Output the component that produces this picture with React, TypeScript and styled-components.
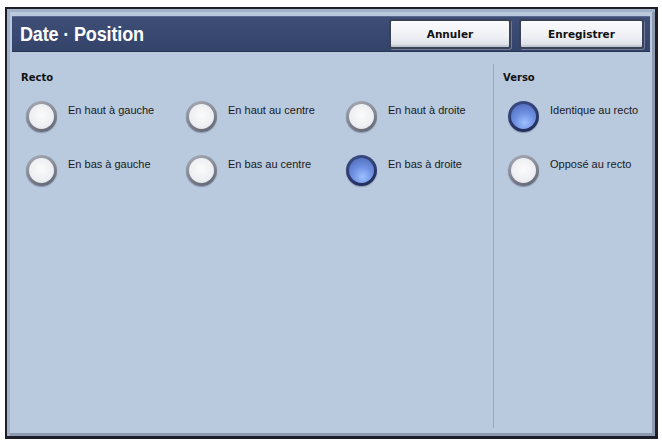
import React from "react";
import styled, { createGlobalStyle } from "styled-components";

const Global = createGlobalStyle`
  html, body { margin: 0; padding: 0; background: #ffffff; }
  body { font-family: "Liberation Sans", Arial, sans-serif; }
`;

const Frame = styled.div`
  box-sizing: border-box;
  margin: 7px 0 0 5px;
  width: 653px;
  height: 432px;
  border: 2px solid #1c1e2a;
  border-right-width: 3px;
  border-bottom-width: 3px;
  background: #b9c9de;
  box-shadow: inset 3px 3px 0 #a4b2c8, inset -3px -3px 0 #8e9ab0;
  display: flex;
  flex-direction: column;
  padding: 7px 5px 5px 5px;
`;

const TitleBar = styled.div`
  height: 36px;
  box-sizing: border-box;
  background: linear-gradient(#3e4e76, #34436a);
  border-top: 1px solid #5a6a90;
  border-bottom: 1px solid #283454;
  display: flex;
  align-items: center;
  justify-content: space-between;
  padding: 0 6px 0 8px;
`;

const Title = styled.h1`
  margin: 0;
  display: inline-block;
  color: #ffffff;
  font-family: "Liberation Sans", Arial, sans-serif;
  font-weight: bold;
  font-size: 21px;
  letter-spacing: -0.2px;
  transform: scaleX(0.86);
  transform-origin: left center;
`;

const Buttons = styled.div`
  display: flex;
  gap: 8px;
`;

const Button = styled.button<{ $w: number }>`
  width: ${(p) => p.$w}px;
  height: 30px;
  box-sizing: border-box;
  border: 2px solid #3a4258;
  border-radius: 3px;
  background: linear-gradient(#fbfbfd 0%, #eef0f4 60%, #d8dce4 100%);
  box-shadow: inset 0 -2px 0 #c2c8d4, 1px 1px 0 #6f7c98;
  font-family: "DejaVu Sans", Verdana, sans-serif;
  font-weight: bold;
  font-size: 10.5px;
  color: #111;
  padding: 0;
`;

const Body = styled.div`
  flex: 1;
  display: flex;
`;

const Section = styled.section<{ $w?: number; $divider?: boolean }>`
  ${(p) => (p.$w ? `width: ${p.$w}px;` : "flex: 1;")}
  box-sizing: border-box;
  padding: ${(p) => (p.$divider ? "8px 0 0 9px" : "20px 0 0 9px")};
  ${(p) => (p.$divider ? "border-left: 1px solid #97a7c0; margin: 12px 0 3px 0;" : "")}
`;

const Label = styled.div`
  font-family: "DejaVu Sans", Verdana, sans-serif;
  font-weight: bold;
  font-size: 10px;
  color: #111;
  height: 14px;
`;

const Grid = styled.div<{ $cols: number }>`
  display: grid;
  grid-template-columns: repeat(${(p) => p.$cols}, 160px);
  row-gap: 23px;
  margin-top: 15px;
  padding-left: 5px;
`;

const Option = styled.div`
  display: flex;
  align-items: flex-start;
  gap: 11px;
  height: 31px;
`;

const Radio = styled.span<{ $on?: boolean }>`
  flex: none;
  width: 31px;
  height: 31px;
  box-sizing: border-box;
  border-radius: 50%;
  padding: 3px;
  background: ${(p) =>
    p.$on
      ? "linear-gradient(160deg, #3d4f86 0%, #1d2a55 100%)"
      : "linear-gradient(160deg, #a8acb6 0%, #5e6370 100%)"};
  box-shadow: 0 1px 1px rgba(40, 50, 80, 0.35);
  &::after {
    content: "";
    display: block;
    width: 100%;
    height: 100%;
    border-radius: 50%;
    background: ${(p) =>
      p.$on
        ? "radial-gradient(circle at 55% 75%, #9ec0ff 0%, #6d8ee0 45%, #4a63b0 100%)"
        : "radial-gradient(circle at 50% 45%, #fbfbfc 0%, #eeeff2 60%, #d4d7de 100%)"};
  }
`;

const OptText = styled.span`
  font-family: "Liberation Sans", Arial, sans-serif;
  font-size: 11px;
  color: #1a1a1a;
  padding-top: 3px;
`;

const recto = [
  { t: "En haut à gauche" },
  { t: "En haut au centre" },
  { t: "En haut à droite" },
  { t: "En bas à gauche" },
  { t: "En bas au centre" },
  { t: "En bas à droite", on: true },
];

const verso = [
  { t: "Identique au recto", on: true },
  { t: "Opposé au recto" },
];

export default function App() {
  return (
    <>
      <Global />
      <Frame>
        <TitleBar>
          <Title>Date · Position</Title>
          <Buttons>
            <Button $w={122}>Annuler</Button>
            <Button $w={125}>Enregistrer</Button>
          </Buttons>
        </TitleBar>
        <Body>
          <Section $w={481}>
            <Label>Recto</Label>
            <Grid $cols={3}>
              {recto.map((o) => (
                <Option key={o.t}>
                  <Radio $on={o.on} />
                  <OptText>{o.t}</OptText>
                </Option>
              ))}
            </Grid>
          </Section>
          <Section $divider>
            <Label>Verso</Label>
            <Grid $cols={1}>
              {verso.map((o) => (
                <Option key={o.t}>
                  <Radio $on={o.on} />
                  <OptText>{o.t}</OptText>
                </Option>
              ))}
            </Grid>
          </Section>
        </Body>
      </Frame>
    </>
  );
}
